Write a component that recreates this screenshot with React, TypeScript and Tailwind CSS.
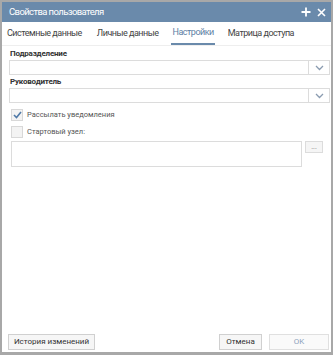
import React from "react";

const font = { fontFamily: 'Roboto, "Noto Sans", sans-serif' };

function Chevron() {
  return (
    <svg width="9" height="6" viewBox="0 0 9 6">
      <path d="M1 1 L4.5 4.5 L8 1" fill="none" stroke="#8a9bb0" strokeWidth="1.3" />
    </svg>
  );
}

function Select() {
  return (
    <div className="flex h-[15px] border border-[#dcdcdc] bg-white">
      <div className="flex-1" />
      <div className="w-[21px] border-l border-[#dcdcdc] flex items-center justify-center">
        <Chevron />
      </div>
    </div>
  );
}

export default function App() {
  return (
    <div
      className="w-[333px] h-[355px] bg-[#a8a8a8] pt-[2px] pl-[2px] pr-[2px] pb-[3px] text-[#333] whitespace-nowrap"
      style={font}
    >
      <div className="flex flex-col h-full bg-white">
        <div className="h-[20px] shrink-0 bg-[#6a8aab] flex items-center pl-[7px] pr-[4px] text-white">
          <div className="flex-1 text-[9.5px] tracking-[-0.6px] leading-none">Свойства пользователя</div>
          <svg width="10" height="10" viewBox="0 0 10 10" className="mr-[6px]">
            <path d="M5 0.5 V9.5 M0.5 5 H9.5" stroke="white" strokeWidth="1.8" />
          </svg>
          <svg width="9" height="9" viewBox="0 0 9 9" className="mr-[1px]">
            <path d="M1 1 L8 8 M8 1 L1 8" stroke="white" strokeWidth="1.6" />
          </svg>
        </div>
        <div className="flex h-[24px] shrink-0 items-stretch text-[9px] tracking-[-0.5px] text-[#444] pl-[5px] border-b border-[#eeeeee]">
          <div className="flex items-center mr-[15px]">Системные данные</div>
          <div className="flex items-center mr-[13px]">Личные данные</div>
          <div className="flex items-center px-[1px] mr-[13px] text-[#5e7fa4] border-b-2 border-[#6a8aab]">Настройки</div>
          <div className="flex items-center">Матрица доступа</div>
        </div>
        <div className="flex-1 pl-[7px] pr-[1px] pt-[2px] flex flex-col">
          <div className="text-[8px] tracking-[-0.2px] font-bold leading-[11px] mb-[1px] pl-[1px]">Подразделение</div>
          <Select />
          <div className="text-[8px] tracking-[-0.2px] font-bold leading-[11px] mt-[1px] mb-[1px] pl-[1px]">Руководитель</div>
          <Select />
          <div className="flex items-center mt-[5px] h-[13px] pl-[2px]">
            <div className="w-[12px] h-[12px] border border-[#d8d8d8] bg-[#f3f3f3] flex items-center justify-center">
              <svg width="9" height="8" viewBox="0 0 9 8">
                <path d="M1 4 L3.5 6.5 L8 1" fill="none" stroke="#4f79a8" strokeWidth="1.6" />
              </svg>
            </div>
            <div className="ml-[4px] text-[7.5px] text-[#555]">Рассылать уведомления</div>
          </div>
          <div className="flex items-center mt-[4px] h-[13px] pl-[2px]">
            <div className="w-[12px] h-[12px] border border-[#d8d8d8] bg-[#f3f3f3]" />
            <div className="ml-[4px] text-[7.5px] text-[#555]">Стартовый узел:</div>
          </div>
          <div className="flex mt-[3px] pl-[2px] mr-[7px]">
            <div className="flex-1 h-[26px] border border-[#dcdcdc]" />
            <div className="ml-[3px] w-[18px] h-[12px] border border-[#dcdcdc] bg-[#f5f5f5] flex items-center justify-center text-[7px] text-[#777] leading-none">
              ...
            </div>
          </div>
          <div className="flex-1" />
        </div>
        <div className="flex items-center h-[18px] shrink-0 pl-[6px] pr-[2px] mb-[1px] text-[8px]">
          <div className="w-[87px] h-[16px] border border-[#d0d0d0] bg-[#f6f6f6] flex items-center justify-center text-[#333]">
            История изменений
          </div>
          <div className="flex-1" />
          <div className="w-[43px] h-[16px] border border-[#d0d0d0] bg-[#f6f6f6] flex items-center justify-center text-[#333]">
            Отмена
          </div>
          <div className="ml-[7px] w-[60px] h-[16px] border border-[#e0e0e0] bg-[#fafafa] flex items-center justify-center text-[#8fa4bd]">
            OK
          </div>
        </div>
      </div>
    </div>
  );
}
